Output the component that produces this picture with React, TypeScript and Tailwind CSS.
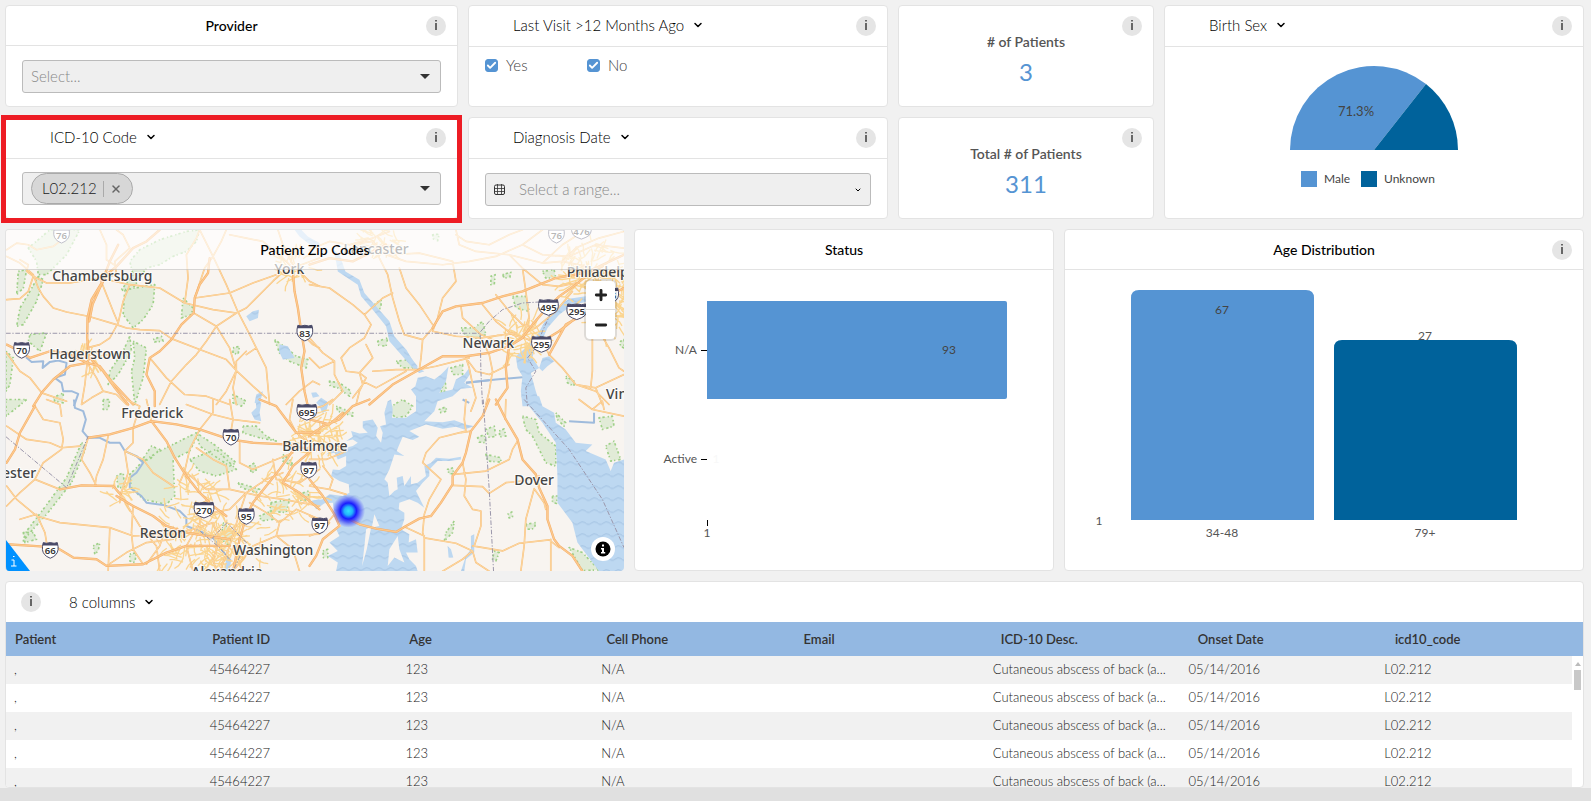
import React, { useState } from 'react'
import { Check, ChevronDown, X } from 'lucide-react'
import clsx from 'clsx'

const columns = ['Patient', 'Patient ID', 'Age', 'Cell Phone', 'Email', 'ICD-10 Desc.', 'Onset Date', 'icd10_code']

const rows = Array.from({ length: 5 }, () => [
  ',',
  '45464227',
  '123',
  'N/A',
  '',
  'Cutaneous abscess of back (a...',
  '05/14/2016',
  'L02.212',
])

function InfoButton({ className }: { className?: string }) {
  return (
    <button
      type="button"
      aria-label="Info"
      className={clsx('flex size-5 shrink-0 items-center justify-center rounded-full bg-[#e5e5e5] text-[#666]', className)}
    >
      <svg viewBox="0 0 20 20" className="size-5" fill="currentColor">
        <rect x="9" y="4" width="2" height="1.500" />
        <rect x="9" y="7" width="2" height="7" />
      </svg>
    </button>
  )
}

function Card({ children, className }: { children: React.ReactNode; className?: string }) {
  return (
    <section className={clsx('relative flex flex-col rounded-sm border border-[#e3e3e3] bg-white', className)}>
      {children}
    </section>
  )
}

function TitleHeader({ title, info }: { title: string; info?: boolean }) {
  return (
    <header className="relative flex h-10 items-center justify-center border-b border-[#e3e3e3]">
      <h2 className="text-sm font-medium text-black">{title}</h2>
      {info && <InfoButton className="absolute top-2.5 right-[11px]" />}
    </header>
  )
}

function MenuHeader({ title }: { title: string }) {
  return (
    <header className="flex items-start justify-between border-b border-[#e3e3e3] py-2.5 pr-[11px] pl-11">
      <button type="button" className="flex items-center gap-2 text-[15px] leading-[18px] text-black">
        {title}
        <ChevronDown className="size-3" strokeWidth={3} />
      </button>
      <InfoButton />
    </header>
  )
}

function Caret() {
  return (
    <svg viewBox="0 0 10 5" className="pointer-events-none h-[5px] w-2.5 fill-[#333]">
      <path d="M0 0h10L5 5z" />
    </svg>
  )
}

function Kpi({ label, value }: { label: string; value: string }) {
  return (
    <Card className="items-center justify-center pt-2">
      <InfoButton className="absolute top-2.5 right-[11px]" />
      <p className="text-sm leading-5 font-semibold text-[#555]">{label}</p>
      <p className="mt-1 text-2xl leading-8 font-normal text-[#5594d3]">{value}</p>
    </Card>
  )
}

function CheckOption({ id, label }: { id: string; label: string }) {
  const [checked, setChecked] = useState(true)

  return (
    <div className="flex w-[102px] items-center gap-2">
      <span className="relative flex size-[13px]">
        <input
          id={id}
          type="checkbox"
          checked={checked}
          onChange={(e) => setChecked(e.target.checked)}
          className="size-[13px] appearance-none rounded-[3px] border border-[#5594d3] checked:bg-[#5594d3]"
        />
        <Check className="pointer-events-none absolute inset-0 size-[13px] p-px text-white" strokeWidth={4} />
      </span>
      <label htmlFor={id} className="text-[15px] leading-5 text-[#444]">
        {label}
      </label>
    </div>
  )
}

/* ---------- Map ---------- */

type Mark = [string, number, number]

interface Tile {
  origin: string
  motorways?: string[]
  roads?: string[]
  parks?: string[]
  water?: string[]
  rivers?: string[]
  borders?: string[]
  labels?: Mark[]
  shields?: Mark[]
}

// Each tile carries its own origin; all path coordinates are local to the tile.
const tiles: Tile[] = [
  {
    origin: 'translate(0 675)',
    motorways: [
      'M355 60L330 110L305 175L275 225L263 280L262 340L268 400L262 415L210 425L160 465L125 505L100 545',
      'M480 15L440 50L400 70L350 125L320 150L300 190L278 240L268 290',
      'M880 140L885 200L895 250L905 320L915 380L905 430L915 500L925 545',
      'M20 360L60 380L90 400L150 380L200 385L262 415L300 425L335 470L400 540',
      'M270 400L310 440L345 490L385 540',
      'M630 100L625 145L600 180L585 220L582 265L545 300L515 345L480 380L450 400L440 450L465 500L465 545',
    ],
    roads: [
      'M20 75L50 55L85 60L110 75L160 65L180 50',
      'M20 95L60 115L100 150L115 190L130 215L160 250L200 262L265 275L350 300L380 310L420 315L480 318L515 342L600 375L680 405L710 438L760 485L800 520',
      'M20 225L60 222L85 200L100 155L80 140L85 120L60 105',
      'M100 155L140 175L210 175L300 160L390 180L480 190L555 235L640 255L710 265L740 250L800 190L840 150',
      'M555 235L565 160L560 90L590 40L600 15',
      'M600 15L640 95L680 180L715 262L740 310L770 370L800 430L810 540',
      'M640 95L665 50L680 15',
      'M640 95L615 130L585 220L690 205L760 175L830 150',
      'M582 265L650 305L690 370L710 438L680 500L650 540',
      'M650 305L715 262',
      'M650 305L620 350L590 390L560 420L515 470L480 540',
      'M300 160L320 210L340 260L355 295L330 340L300 360L262 370',
      'M390 180L370 230L355 295',
      'M300 160L350 150L345 110L390 70L370 30L350 15',
      'M300 15L320 60L320 105L350 125',
      'M450 400L500 460L555 510L620 515L690 540',
      'M710 438L700 490L710 540',
      'M740 380L710 410L710 438',
      'M770 370L740 390',
      'M835 15L850 60L880 120L930 170L960 185',
      'M690 30L740 40L790 50L850 100L880 130L960 100',
      'M20 385L60 440L90 460L125 505L200 530',
      'M262 415L255 480L245 540',
      'M262 415L290 460L310 500L275 520L245 540',
      'M310 500L350 510L380 540',
      'M900 320L940 360L960 370',
      'M860 540L900 500L940 470L960 480',
    ],
    parks: [
      'M365 195L400 150L390 110L420 75L480 45L560 20L600 15L590 50L560 80L520 95L480 120L440 130L400 190L375 200Z',
      'M375 195L465 180L460 240L430 285L400 310L370 270Z',
      'M400 350L440 370L430 460L405 540L395 440L405 400Z',
      'M390 335L395 380L355 450L325 480L330 440L370 380Z',
      'M85 70L150 15L240 15L200 90L140 150L115 150L110 110Z',
      'M115 155L130 165L110 230L70 300L50 305L60 250L90 200Z',
      'M55 140L80 135L70 190L50 210Z',
      'M90 330L140 325L120 380L85 350Z',
      'M18 380L40 400L30 480L18 500Z',
      'M550 220L580 250L575 270L545 280Z',
      'M825 345L860 370L890 395L925 405L920 430L870 410L840 385Z',
      'M160 520L190 505L190 535L165 530Z',
      'M460 345L485 335L490 350L465 352Z',
      'M700 370L720 365L715 390L700 385Z',
      'M700 510L740 530L725 545L700 535Z',
    ],
    water: [
      'M740 275L760 260L778 255L775 280L750 290Z',
      'M840 360L865 365L885 400L850 405L838 380Z',
      'M885 15L900 35L925 55L960 75L960 55L925 35L905 15Z',
      'M770 510L790 500L780 540L765 535Z',
    ],
    rivers: ['M78 398L95 412L130 410L128 430L150 412L175 408L200 415L195 450L165 460L185 475L190 500L215 500L235 508L222 545'],
    borders: ['M18 326H900'],
    labels: [
      ['Chambersburg', 157, 168],
      ['York', 825, 148],
      ['Hagerstown', 148, 402],
    ],
    shields: [
      ['76', 185, 30],
      ['70', 65, 376],
      ['83', 916, 324],
    ],
  },
  {
    origin: 'translate(930 675)',
    motorways: [
      'M370 310L400 260L440 245L520 235L580 215L640 200L690 180L740 160L800 150L880 125',
      'M180 540L250 480L330 435L400 395L470 395L540 385L600 365L640 340L670 300L700 265L750 215L800 180L860 130L945 90',
      'M700 350L750 320L800 280L850 240L945 190',
      'M720 390L770 300L830 265L900 230',
      'M600 365L590 430L595 490L560 540',
      'M0 120L60 100L130 110L200 75L230 60',
    ],
    roads: [
      'M0 75L60 50L120 60L190 40L240 20',
      'M120 60L190 50L230 90L290 110L400 120L480 110L560 95L640 60L700 15',
      'M190 50L210 100L235 150L250 220L270 290L285 330L340 345L370 310',
      'M270 130L290 190L330 240L370 300',
      'M240 90L330 85L430 110L440 170L400 220L385 280L370 320L440 335L515 340L620 325',
      'M0 180L60 190L130 240L165 270L185 300L165 340L120 370L95 400L110 440L150 445L190 400L170 360',
      'M165 270L220 220L250 205',
      'M340 345L335 400L330 435',
      'M455 245L460 280L515 330L560 350',
      'M515 340L540 390L550 440L540 500L530 540',
      'M440 30L470 50L540 60L600 30L640 15',
      'M440 15L450 60L500 80L600 90L700 115L760 110L830 125',
      'M600 90L640 130L650 200L660 280L640 340',
      'M640 130L700 180L750 185L800 175',
      'M560 210L600 260L640 300L680 310L740 260L790 200',
      'M520 240L560 290L610 330L660 345',
      'M700 350L720 390L760 430L800 480L860 500L900 540',
      'M850 340L850 440L845 490',
      'M870 320L900 370L930 430L945 440',
      'M700 115L760 60L830 15',
      'M760 110L800 70L870 40L945 20',
      'M640 60L700 90L780 95L860 60L945 70',
      'M0 340L40 385L75 410L75 450L100 500L60 540',
      'M150 445L160 480L130 520',
      'M190 440L260 435L330 435L380 425L480 400',
      'M470 400L480 430L490 480L500 520L485 560',
      'M470 400L500 440L540 450L600 420',
      'M800 480L860 490L945 450',
      'M860 490L880 540',
      'M0 400L30 430L75 410',
      'M150 445L170 460L150 500L140 540',
      'M160 470L200 490L290 440',
    ],
    parks: [
      'M455 310L495 310L520 290L530 330L500 340L470 335Z',
      'M610 215L650 215L660 260L620 250Z',
      'M700 140L735 135L740 160L710 160Z',
      'M260 410L300 405L310 430L280 430Z',
      'M425 430L460 420L460 450L430 450Z',
      'M195 240L215 225L215 250L200 258Z',
      'M545 155L558 150L555 180L545 180Z',
      'M580 150L605 142L602 158L585 160Z',
      'M60 470L90 475L125 500L120 515L85 490L62 485Z',
      'M770 455L795 470L795 485L775 475Z',
      'M205 350L235 340L230 365L208 362Z',
      'M370 30L390 28L385 48L372 42Z',
      'M935 350L945 345V370L933 365Z',
    ],
    water: [
      'M70 70L92 95L108 140L150 165L165 205L200 245L240 290L255 335L290 375L325 430L345 440L330 445L310 430L275 390L240 350L230 305L190 255L155 215L145 180L85 140L78 100Z',
      'M830 215L780 222L740 250L710 285L685 330L655 365L620 395L625 430L640 455L635 500L640 545L695 545L680 500L665 445L690 430L670 400L675 375L700 345L715 310L750 270L790 240L830 232Z',
      'M700 400L720 395L735 410L715 425L700 440L690 430Z',
    ],
    rivers: ['M470 475L560 465L640 458'],
    borders: [
      'M12 326H510L540 290L580 255L640 235L690 232',
      'M513 330L515 440L520 545',
      'M725 265L700 320L680 370L655 400L680 440L650 490L655 545',
    ],
    labels: [
      ['Lancaster', 102, 89],
      ['Philadelphia', 773, 157],
      ['Newark', 460, 370],
      ['Vineland', 891, 525],
    ],
    shields: [
      ['76', 742, 30],
      ['476', 817, 18],
      ['495', 718, 247],
      ['295', 803, 260],
      ['95', 905, 212],
      ['295', 697, 358],
    ],
  },
  {
    origin: 'translate(0 1200)',
    motorways: [
      'M105 20L60 100L45 150L20 190',
      'M265 115L330 105L400 85L455 65L500 125L525 175L560 230L600 280L640 320L680 350',
      'M455 65L530 75L600 90L690 120L760 130L860 135L930 150',
      'M960 330L900 280L850 250L880 200L940 150',
      'M350 290L400 320L460 350L500 380L560 400L620 410L690 420',
      'M20 435L100 440L170 445L220 475L290 480L320 500L430 495L500 460L560 440L620 440L690 440',
      'M890 140L840 210L800 260L760 310L740 350L720 420L700 516',
      'M180 270L245 258L340 260L362 285',
      'M780 0L830 20L860 60L890 100L960 100',
    ],
    roads: [
      'M20 80L80 120L150 130L185 145L240 140',
      'M105 20L130 60L180 70L190 120L185 150L130 190L105 240L60 280L20 320',
      'M265 115L245 180L270 220L290 260',
      'M325 110L310 180L290 230L285 260',
      'M400 85L400 130L375 155L385 220L362 285L360 310',
      'M375 155L430 180L460 220L520 260',
      'M20 260L50 300L110 350L180 370L330 385L325 516',
      'M105 240L180 270',
      'M60 360L110 345L135 400L140 430',
      'M330 385L400 410L520 405L580 390L640 370',
      'M362 285L420 380L470 440L480 516',
      'M600 90L570 150L555 215L540 250',
      'M590 145L640 180L680 200L690 270',
      'M690 0L700 60L690 120',
      'M600 90L640 40L640 0',
      'M555 215L620 270L690 270L780 290L850 300L960 320',
      'M720 130L720 190L760 210L830 180L880 160',
      'M700 516L760 440L830 410L960 405',
      'M660 516L690 440L720 340L740 280L800 240L850 220',
      'M750 310L800 340L840 370L830 410L880 450L900 516',
      'M840 370L890 330L960 360',
      'M620 300L600 370L560 440L580 516',
      'M640 370L660 420L640 480L650 516',
      'M500 380L480 440L440 495',
      'M400 320L395 400L400 450L430 495',
      'M320 500L380 460L440 430L520 420',
      'M740 280L690 330L640 340L600 320',
      'M440 0L455 65',
      'M560 15L640 45L700 60L780 70',
      'M880 0L870 60L890 100L930 130',
      'M140 0L180 15L185 50',
      'M380 0L420 20L400 85',
      'M820 180L830 240L900 250L960 210',
    ],
    parks: [
      'M390 225L425 190L470 160L600 95L570 155L520 180L525 290L500 315L430 300L395 265Z',
      'M570 180L650 150L710 210L650 230L600 215Z',
      'M730 80L770 80L800 110L830 125L780 115L730 100Z',
      'M245 130L260 140L215 250L140 345L90 400L70 425L80 395L130 330L200 235Z',
      'M425 185L455 140L480 150L450 180Z',
      'M590 100L650 140L710 190L690 200L600 140Z',
      'M815 310L870 300L860 340L810 335Z',
      'M350 230L370 220L375 265L355 265Z',
      'M18 0L80 0L50 25L18 50Z',
      'M310 0L330 0L325 30L310 30Z',
      'M850 165L875 185L880 200L850 185Z',
      'M750 200L765 190L770 215L755 220Z',
      'M780 350L815 335L820 360L785 365Z',
      'M715 250L780 270L770 280L725 265Z',
      'M280 440L300 430L295 455L285 465Z',
      'M390 465L410 460L405 490L390 485Z',
      'M670 370L700 400L690 440L665 420Z',
      'M900 285L925 275L930 300L905 305Z',
      'M70 400L100 400L110 420L75 430Z',
    ],
    water: [
      'M768 0L785 10L780 40L785 65L765 60L755 40L770 25Z',
      'M680 470L695 480L690 516L675 516Z',
      'M935 305L960 300V310Z',
    ],
    rivers: [
      'M222 0L225 25L250 35L258 60L248 95L265 115L300 115L330 130L360 130L375 155L410 170L430 190L410 220L390 235L390 265L425 290L440 310L495 318L540 335L560 355L560 380L600 395',
      'M600 395L640 415L665 450L685 475',
    ],
    borders: ['M18 112L200 265L265 110', 'M600 395L660 445L690 480', 'M635 420L682 370L740 430L700 516'],
    labels: [
      ['Frederick', 364, 57],
      ['Winchester', -118, 237],
      ['Reston', 420, 416],
      ['Washington', 700, 466],
      ['Alexandria', 575, 534],
      ['Baltimore', 848, 154],
    ],
    shields: [
      ['695', 922, 37],
      ['70', 694, 112],
      ['97', 928, 211],
      ['270', 613, 331],
      ['95', 740, 350],
      ['66', 151, 452],
    ],
  },
  {
    origin: 'translate(930 1200)',
    motorways: [
      'M0 240L40 290L75 345L90 380L40 420L20 470L0 500',
      'M110 355L150 375L200 388L260 398L290 380L330 358L365 350',
      'M540 0L520 50L485 95L470 160L460 190L430 230L430 255L395 310L365 350',
      'M560 0L590 60L625 120L640 180L680 225L690 265L715 320L715 360L735 420L750 440L790 470L820 516',
      'M0 110L40 80L90 60L130 20L180 0',
      'M0 60L60 75L100 40',
    ],
    roads: [
      'M470 0L465 60L470 95L390 115L350 160L340 190L395 240L360 300L345 345L340 400L345 416V516',
      'M485 95L455 100',
      'M345 416L440 432L490 455L500 490L540 516',
      'M285 382L345 410',
      'M490 440L580 455L630 432L720 422L750 445',
      'M435 225L530 215L600 180L610 150L625 125',
      'M430 258L520 262L540 282L590 250L640 245L690 230',
      'M460 190L470 240L465 290L490 330L515 335L515 380L495 440',
      'M675 268L650 360L645 440L635 516',
      'M675 268L705 310L710 330',
      'M725 420V516',
      'M590 0L588 60',
      'M810 0L850 30L945 50',
      'M850 30L880 5L885 30',
      'M0 180L50 180L100 160L100 140L60 140',
      'M40 200L70 240L60 270L110 285',
      'M0 260L60 270',
      'M490 455L460 480L400 516',
      'M0 30L40 20L70 0',
      'M0 350L50 375L75 345',
      'M0 410L40 395L60 370',
    ],
    parks: [
      'M640 50L680 60L690 100L740 140L740 200L710 190L670 110L650 90Z',
      'M230 30L280 0L310 20L290 50L260 55Z',
      'M505 115L525 105L530 130L510 128Z',
      'M530 90L555 80L560 110L540 115Z',
      'M570 95L585 88L590 110L572 112Z',
      'M530 165L575 175L575 188L535 185Z',
      'M410 400L435 365L430 400L405 425Z',
      'M415 210L432 205L432 222L420 225Z',
      'M650 375L680 370L675 388L655 390Z',
      'M595 345L608 338L610 352L600 356Z',
      'M730 290L745 290L742 312L730 310Z',
      'M740 40L770 70L765 80L745 60Z',
      'M890 140L915 125L935 180L905 185Z',
      'M780 445L820 460L870 512L820 514Z',
      'M870 55L910 50L915 80L880 90Z',
      'M555 455L570 460L560 485L550 480Z',
      'M390 30L410 22L412 35L395 40Z',
      'M80 20L130 40L130 50L85 35Z',
      'M40 455L55 450L55 475L42 475Z',
    ],
    water: [
      'M635 -10L700 70L740 130L745 230L745 310L790 370L805 430L870 516H945V180L915 190L905 215L890 180L830 155L850 135L800 130L770 90L740 70L735 40L700 20L690 -10Z',
      'M415 440L425 450L432 475L418 475Z',
      'M485 410L495 405L495 460L470 480L465 516L455 516L470 470L485 450Z',
    ],
    rivers: ['M780 65L855 70V40'],
    borders: ['M522 0L540 270L553 516', 'M645 0L780 150L880 300L945 445'],
    labels: [['Dover', 615, 258]],
    shields: [['97', 31, 378]],
  },
  // Chesapeake Bay, with Kent Island cut out
  {
    origin: 'translate(930 1050)',
    parks: ['M395 125L405 95L412 110L400 140Z', 'M150 325L170 318L165 330Z', 'M118 300L135 300L140 315L122 320Z'],
    water: [
      'M325 85L350 80L375 90L395 75L410 60L418 50L410 95L390 130L430 120L440 90L465 75L480 55L485 70L465 100L490 115L455 118L430 140L385 155L375 185L345 215L400 218L435 212L470 225L495 230L465 240L440 232L400 238L350 225L300 245L330 262L310 272L280 262L268 290L262 305L285 320L255 315L245 345L240 360L225 390L235 400L240 440L255 425L265 420L262 385L280 380L285 410L305 380L305 405L325 400L350 380L345 350L365 340L380 325L420 328L455 322L455 330L420 335L385 335L360 360L360 380L340 400L320 425L345 475L325 460L300 450L270 460L268 480L285 490L285 510L275 540L300 555L298 580L320 570L325 610L290 610L300 630L320 650L325 666H80L85 640L55 620L85 605L60 580L90 560L80 540L95 530L75 490L70 460L45 462L20 480L5 455L40 450L60 435L100 440L120 430L118 405L90 395L65 380L70 360L90 362L110 350L110 320L85 330L75 310L50 315L70 300L110 295L130 290L145 280L130 270L110 275L130 262L125 245L150 252L175 250L160 235L160 215L190 210L205 235L200 260L215 280L220 250L212 230L230 225L225 190L235 155L245 150L250 180L248 205L290 205L320 185L320 140L305 120L318 110Z' +
        'M195 495L210 530L185 535L172 600L158 650L165 590L170 540L188 530Z' +
        'M240 600L265 560L270 600L285 640L255 625L235 650Z',
      'M20 160L35 145L58 160L50 185L38 190L30 170Z',
      'M280 0L290 0L305 25L325 50L318 60L295 35Z',
      'M5 130L20 128L30 140L10 145Z',
    ],
    rivers: ['M460 150L480 160M470 100L540 92'],
  },
]

// Dense street webs around the larger cities: x, y, radius, number of streets
const cities = [
  [955, 1310, 70, 70],
  [690, 1640, 110, 130],
  [1570, 1010, 70, 60],
  [1780, 830, 110, 120],
  [560, 1620, 110, 60],
  [600, 1480, 70, 34],
  [870, 1480, 90, 46],
  [1130, 710, 60, 36],
  [885, 795, 45, 24],
  [1840, 950, 60, 36],
  [268, 1085, 34, 18],
  [362, 1480, 28, 16],
]

function cityStreets() {
  let seed = 11
  const rand = () => {
    seed = (seed * 16807) % 2147483647
    return seed / 2147483647
  }
  let d = ''
  for (const [cx, cy, r, n] of cities) {
    for (let i = 0; i < n; i++) {
      const angle = rand() * Math.PI * 2
      const dist = rand() * r
      let x = cx + Math.cos(angle) * dist
      let y = cy + Math.sin(angle) * dist
      let dir = angle + (rand() > 0.5 ? 0 : Math.PI / 2)
      d += `M${x.toFixed(0)} ${y.toFixed(0)}`
      for (let k = 0; k < 3; k++) {
        dir += (rand() - 0.5) * 0.8
        x += Math.cos(dir) * 14
        y += Math.sin(dir) * 14
        d += `L${x.toFixed(0)} ${y.toFixed(0)}`
      }
    }
  }
  return d
}

const streets = cityStreets()

const join = (paths?: string[]) => (paths ?? []).join('')

function Shield({ text, x, y }: { text: string; x: number; y: number }) {
  const w = text.length > 2 ? 31 : 25
  return (
    <g transform={`translate(${x} ${y})`}>
      <path
        d={`M${-w + 4} -22Q${-w / 2} -18 0 -22Q${w / 2} -18 ${w - 4} -22Q${w + 3} 2 ${w - 8} 14Q${w / 2} 20 0 25Q${-w / 2} 20 ${-w + 8} 14Q${-w - 3} 2 ${-w + 4} -22Z`}
        fill="#fff"
        stroke="#4a4a68"
        strokeWidth="3"
      />
      <path d={`M${-w + 4} -22Q${-w / 2} -18 0 -22Q${w / 2} -18 ${w - 4} -22L${w - 2} -13H${-w + 2}Z`} fill="#4a4a68" />
      <text y="12" textAnchor="middle" fontSize="29" fontWeight="600" fill="#333">
        {text}
      </text>
    </g>
  )
}

function MapCanvas() {
  return (
    <svg
      viewBox="18 690 1857 1026"
      preserveAspectRatio="xMidYMid slice"
      className="absolute inset-0 size-full font-['Noto_Sans','Open_Sans',sans-serif]"
      role="img"
      aria-label="Map of patient zip codes"
    >
      <defs>
        <pattern id="waves" width="36" height="36" patternUnits="userSpaceOnUse">
          <rect width="36" height="36" fill="#bdd8f1" />
          <path d="M0 10Q9 20 18 12T36 10" fill="none" stroke="#a3c2e2" strokeWidth="3" />
        </pattern>
        <radialGradient id="heat">
          <stop offset="0" stopColor="#34e0ff" />
          <stop offset="0.25" stopColor="#22b4fa" />
          <stop offset="0.48" stopColor="#1a1aff" />
          <stop offset="0.68" stopColor="#2020ff" stopOpacity="0.6" />
          <stop offset="1" stopColor="#3030ff" stopOpacity="0" />
        </radialGradient>
      </defs>
      <rect x="18" y="690" width="1857" height="1026" fill="#f8f4f0" />
      {tiles.map((tile) => (
        <g key={tile.origin} transform={tile.origin}>
          <path d={join(tile.parks)} fill="#e1ebd7" stroke="#9fd088" strokeWidth="5" strokeDasharray="4 6 7 9" strokeLinejoin="round" />
        </g>
      ))}
      {tiles.map((tile) => (
        <g key={tile.origin} transform={tile.origin} fill="none">
          <path d={join(tile.water)} fill="url(#waves)" fillRule="evenodd" />
          <path d={join(tile.rivers)} stroke="#9fbbdc" strokeWidth="6" strokeLinejoin="round" />
        </g>
      ))}
      <path d={streets} fill="none" stroke="#fbd590" strokeWidth="4" strokeLinejoin="round" />
      {tiles.map((tile) => (
        <g key={tile.origin} transform={tile.origin} fill="none" strokeLinejoin="round" strokeLinecap="round">
          <path d={join(tile.roads)} stroke="#f7c07c" strokeWidth="5" />
          <path d={join(tile.roads)} stroke="#fdd6a0" strokeWidth="3" />
          <path d={join(tile.motorways)} stroke="#f5ae68" strokeWidth="7" />
          <path d={join(tile.motorways)} stroke="#fcc98e" strokeWidth="4" />
          <path d={join(tile.borders)} stroke="#9b97ab" strokeWidth="3" strokeDasharray="14 5 4 5" strokeLinecap="butt" />
        </g>
      ))}
      {tiles.map((tile) => (
        <g key={tile.origin} transform={tile.origin}>
          {tile.shields?.map(([text, x, y]) => (
            <Shield key={`${text}-${x}`} text={text} x={x} y={y} />
          ))}
          {tile.labels?.map(([text, x, y]) => (
            <text
              key={text}
              x={x}
              y={y}
              fontSize="42"
              fontWeight="500"
              fill="#444"
              stroke="#fff"
              strokeOpacity="0.8"
              strokeWidth="6"
              paintOrder="stroke"
            >
              {text}
            </text>
          ))}
        </g>
      ))}
      <circle cx="1047" cy="1535" r="50" fill="url(#heat)" />
    </svg>
  )
}

function MapCard() {
  return (
    <section className="relative overflow-hidden rounded-sm border-t border-l border-[#e3e3e3]">
      <MapCanvas />
      <header className="relative flex h-10 items-center justify-center border-b border-black/15 bg-white/65">
        <h2 className="text-sm font-medium text-black">Patient Zip Codes</h2>
      </header>
      <div className="absolute top-[51px] right-[9px] flex w-[29px] flex-col divide-y divide-[#ddd] rounded bg-white shadow-[0_0_0_2px_rgba(0,0,0,0.1)]">
        <button type="button" aria-label="Zoom in" className="flex h-[29px] items-center justify-center">
          <svg viewBox="0 0 12 12" className="size-3.5" stroke="#222" strokeWidth="2.500" strokeLinecap="round">
            <path d="M6 2v8M2 6h8" />
          </svg>
        </button>
        <button type="button" aria-label="Zoom out" className="flex h-[29px] items-center justify-center">
          <svg viewBox="0 0 12 12" className="size-3.5" stroke="#222" strokeWidth="2.500" strokeLinecap="round">
            <path d="M2 6h8" />
          </svg>
        </button>
      </div>
      <button
        type="button"
        aria-label="Map attribution"
        className="absolute right-[9px] bottom-2.5 flex size-6 items-center justify-center rounded-full bg-white"
      >
        <svg viewBox="0 0 16 16" className="size-4">
          <circle cx="8" cy="8" r="7.5" />
          <path d="M6 7h3v4h1.200v1.500H6V11h1V8.500H6zM7 3.500h2v2H7z" fill="#fff" />
        </svg>
      </button>
      <a href="#map-info" aria-label="Map information" className="absolute bottom-0 left-0">
        <svg viewBox="0 0 24 31" className="h-[31px] w-6">
          <path d="M0 0L24 31H0z" fill="#0091ff" />
          <path d="M7 16.500h1.500M5.500 20h2.500v6M5 26h5.500" fill="none" stroke="#fff" />
        </svg>
      </a>
    </section>
  )
}

/* ---------- Charts ---------- */

function BirthSexChart() {
  return (
    <svg viewBox="0 0 418 171" className="w-full text-[13px] font-normal" role="img" aria-label="Birth sex">
      <path d="M209 103H125A84 84 0 0 1 261 37Z" fill="#5594d3" />
      <path d="M209 103L261 37A84 84 0 0 1 293 103Z" fill="#00629b" />
      <text x="191" y="69" textAnchor="middle" fill="#444">71.3%</text>
      <rect x="136" y="124" width="16" height="16" fill="#5594d3" />
      <text x="159" y="136" fontSize="12" fill="#444">Male</text>
      <rect x="196" y="124" width="16" height="16" fill="#00629b" />
      <text x="219" y="136" fontSize="12" fill="#444">Unknown</text>
    </svg>
  )
}

function StatusChart() {
  return (
    <svg viewBox="0 0 418 300" className="w-full text-xs font-normal" fill="#555" role="img" aria-label="Status">
      <path d="M72 31H370Q372 31 372 33V127Q372 129 370 129H72Z" fill="#5594d3" />
      <text x="62" y="84" textAnchor="end">N/A</text>
      <text x="62" y="193" textAnchor="end">Active</text>
      <text x="81" y="193" textAnchor="middle" fill="#f8f8f8">1</text>
      <text x="314" y="84" textAnchor="middle" fill="#444">93</text>
      <path d="M66 80.500H72M66 189.500H72M72.500 250V256" stroke="#000" />
      <text x="72" y="267" textAnchor="middle">1</text>
    </svg>
  )
}

function AgeChart() {
  return (
    <svg viewBox="0 0 518 300" className="w-full text-xs font-normal" fill="#555" role="img" aria-label="Age distribution">
      <path d="M66 250V28Q66 20 74 20H241Q249 20 249 28V250Z" fill="#5594d3" />
      <path d="M269 250V78Q269 70 277 70H444Q452 70 452 78V250Z" fill="#00629b" />
      <text x="157" y="44" textAnchor="middle" fill="#444">67</text>
      <text x="360" y="70" textAnchor="middle">27</text>
      <text x="34" y="255" textAnchor="middle">1</text>
      <text x="157" y="267" textAnchor="middle">34-48</text>
      <text x="360" y="267" textAnchor="middle">79+</text>
    </svg>
  )
}

/* ---------- Table ---------- */

function PatientTable() {
  return (
    <Card className="min-h-0 flex-1 overflow-hidden">
      <div className="flex items-center gap-7 px-[15px] py-2.5">
        <InfoButton />
        <button type="button" className="flex items-center gap-2 text-[15px] leading-5 text-black">
          {columns.length} columns
          <ChevronDown className="size-3" strokeWidth={3} />
        </button>
      </div>
      <div className="relative">
        <table className="block w-full text-left">
          <thead className="block">
            <tr className="grid grid-cols-8 bg-[#93b8e2]">
              {columns.map((column) => (
                <th key={column} className="px-[9px] py-2 text-[13px] leading-[18px] font-semibold text-[#333]">
                  {column}
                </th>
              ))}
            </tr>
          </thead>
          <tbody className="mr-[11px] block">
            {rows.map((row, i) => (
              <tr key={i} className="grid grid-cols-8 odd:bg-[#f1f1f1]">
                {row.map((cell, j) => (
                  <td key={j} className="h-7 truncate px-2 text-[13px] leading-[26px] text-[#222]">
                    {cell}
                  </td>
                ))}
              </tr>
            ))}
          </tbody>
        </table>
        <div className="absolute top-[34px] right-0 bottom-0 flex w-[11px] flex-col items-center pt-1.5">
          <svg viewBox="0 0 6 4" className="h-1 w-1.5 fill-[#bbb]">
            <path d="M0 4L3 0L6 4z" />
          </svg>
          <div className="mt-1 h-5 w-[7px] bg-[#c8c8c8]" />
        </div>
      </div>
    </Card>
  )
}

export default function App() {
  const [codes, setCodes] = useState(['L02.212'])

  return (
    <div className="flex h-screen flex-col overflow-hidden bg-[#f1f1f1] font-['Lato',sans-serif] font-light">
      <main className="flex min-h-0 flex-1 flex-col gap-2.5 pt-[5px] pr-[7px] pl-[5px]">
        {/* Filters */}
        <div className="grid grid-cols-[453fr_420fr_256fr_420fr] grid-rows-2 gap-2.5">
          <Card>
            <TitleHeader title="Provider" info />
            <div className="relative mx-4 mt-3.5 mb-3">
              <select
                aria-label="Provider"
                className="h-[33px] w-full appearance-none rounded-[3px] border border-[#bbb] bg-[#efefef] px-2 text-[15px] text-[#888]"
              >
                <option>Select...</option>
              </select>
              <span className="pointer-events-none absolute inset-y-0 right-[11px] flex items-center">
                <Caret />
              </span>
            </div>
          </Card>

          <Card>
            <MenuHeader title="Last Visit >12 Months Ago" />
            <div className="flex px-4 pt-2">
              <CheckOption id="visit-yes" label="Yes" />
              <CheckOption id="visit-no" label="No" />
            </div>
          </Card>

          <Kpi label="# of Patients" value="3" />

          <Card className="row-span-2">
            <MenuHeader title="Birth Sex" />
            <BirthSexChart />
          </Card>

          <Card>
            <MenuHeader title="ICD-10 Code" />
            <div className="mx-4 mt-[13px] mb-3 flex h-[33px] items-center justify-between rounded-[3px] border border-[#bbb] bg-[#efefef] pr-2.5 pl-2">
              <div className="flex gap-1">
                {codes.map((code) => (
                  <span
                    key={code}
                    className="flex h-[31px] items-center rounded-full border border-[#aaa] bg-[#d7d7d7] pr-2.5 pl-2.5 text-[15px] text-[#222]"
                  >
                    {code}
                    <button
                      type="button"
                      aria-label={`Remove ${code}`}
                      onClick={() => setCodes(codes.filter((c) => c !== code))}
                      className="ml-1.5 border-l border-[#aaa] py-0.5 pl-1.5 text-[#666]"
                    >
                      <X className="size-3" strokeWidth={3} />
                    </button>
                  </span>
                ))}
              </div>
              <button type="button" aria-label="Open ICD-10 codes">
                <Caret />
              </button>
            </div>
            {/* Highlight */}
            <div className="pointer-events-none absolute -inset-x-[5px] -top-[3px] -bottom-[5px] z-10 border-5 border-[#ed1c24]" />
          </Card>

          <Card>
            <MenuHeader title="Diagnosis Date" />
            <div className="mx-4 mt-3.5 mb-3 flex h-[33px] items-center rounded-[3px] border border-[#bbb] bg-[#efefef] px-2">
              <svg viewBox="0 0 11 11" className="size-[11px] shrink-0" fill="none" stroke="#333">
                <rect x="0.500" y="1" width="10" height="9.500" rx="1.500" />
                <path d="M3.500 0V11M7.500 0V11M0 4.500H11M0 7.500H11" strokeWidth="0.800" />
              </svg>
              <input
                type="text"
                aria-label="Diagnosis date range"
                placeholder="Select a range..."
                className="ml-3.5 min-w-0 flex-1 bg-transparent text-[15px] placeholder:text-[#888]"
              />
              <ChevronDown className="size-2" strokeWidth={3} />
            </div>
          </Card>

          <Kpi label="Total # of Patients" value="311" />
        </div>

        {/* Map and charts */}
        <div className="grid grid-cols-[619fr_420fr_520fr] gap-2.5">
          <MapCard />
          <Card>
            <TitleHeader title="Status" />
            <StatusChart />
          </Card>
          <Card>
            <TitleHeader title="Age Distribution" info />
            <AgeChart />
          </Card>
        </div>

        <PatientTable />
      </main>
      <div className="h-[13px] shrink-0 bg-[#e0e0e0]" />
    </div>
  )
}
